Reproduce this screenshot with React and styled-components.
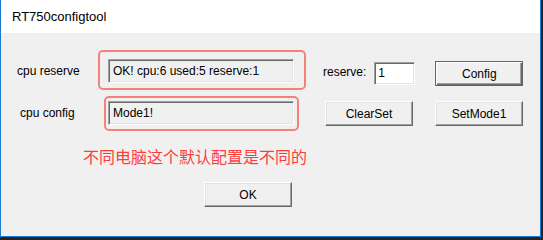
import React from 'react';
import styled, { createGlobalStyle, css } from 'styled-components';

const GlobalStyle = createGlobalStyle`
  html, body {
    margin: 0;
    padding: 0;
    background: #232323;
  }
  body {
    font-family: "Liberation Sans", Arial, sans-serif;
    font-size: 12px;
    color: #000;
  }
`;

const Window = styled.div`
  box-sizing: border-box;
  width: 541px;
  height: max(219px, calc(100vh - 3px));
  border: 1px solid #1a7ad0;
  border-top: none;
  background: #f0f0f0;
  display: flex;
  flex-direction: column;
`;

const TitleBar = styled.div`
  height: 33px;
  background: #fff;
  display: flex;
  align-items: center;
  padding-left: 11px;
  font-size: 13px;
  color: #000;
  flex-shrink: 0;
`;

const Body = styled.div`
  flex: 1;
  padding-top: 26px;
  padding-left: 16px;
  display: flex;
  flex-direction: column;
`;

const Row = styled.div`
  display: flex;
  align-items: flex-start;
  height: ${p => p.$h}px;
  margin-bottom: ${p => p.$mb || 0}px;
`;

const Label = styled.div`
  width: ${p => (p.$auto ? 'auto' : `${91 - (p.$indent || 0)}px`)};
  padding-left: ${p => p.$indent || 0}px;
  line-height: 24px;
  margin-top: ${p => p.$dy || 0}px;
  margin-left: ${p => p.$ml || 0}px;
  white-space: nowrap;
`;

const FieldWrap = styled.div`
  position: relative;
  margin-top: ${p => p.$dy || 0}px;
  margin-left: ${p => p.$ml || 0}px;
`;

const Edit = styled.div`
  box-sizing: border-box;
  width: ${p => p.$w}px;
  height: ${p => p.$h}px;
  border: 1px solid;
  border-color: #a0a0a0 #ffffff #ffffff #a0a0a0;
  box-shadow: inset 1px 1px 0 #696969, inset -1px -1px 0 #e3e3e3;
  background: ${p => (p.$white ? '#fff' : '#f0f0f0')};
  padding-left: ${p => p.$pl || 4}px;
  line-height: ${p => p.$h - 4}px;
  padding-top: 1px;
  white-space: nowrap;
  overflow: hidden;
`;

// red annotation frame drawn over an edit box
const Annotation = styled.div`
  position: absolute;
  top: ${p => p.$t}px;
  left: ${p => p.$l}px;
  right: ${p => p.$r}px;
  bottom: ${p => p.$b}px;
  border: 2px solid #f3827c;
  border-radius: 5px;
  pointer-events: none;
`;

const Button = styled.div`
  box-sizing: border-box;
  width: 88px;
  height: 25px;
  margin-top: ${p => p.$dy || 0}px;
  margin-left: ${p => p.$ml || 0}px;
  background: #f0f0f0;
  display: flex;
  align-items: center;
  justify-content: center;
  font-size: 12px;
  border: 1px solid;
  border-color: #ffffff #696969 #696969 #ffffff;
  box-shadow: inset -1px -1px 0 #a0a0a0, inset 1px 1px 0 #e3e3e3;
  ${p =>
    p.$default &&
    css`
      border: 1px solid #646464;
      box-shadow: inset 1px 1px 0 #ffffff, inset -1px -1px 0 #696969,
        inset -2px -2px 0 #a0a0a0;
    `}
`;

const Note = styled.div`
  margin-top: 21px;
  padding-left: 66px;
  font-family: "Noto Sans CJK SC", "Liberation Sans", sans-serif;
  font-size: 16px;
  line-height: 18px;
  color: #ff3c3c;
`;

const Footer = styled.div`
  display: flex;
  margin-top: 17px;
  padding-left: 187px;
`;

export default function App() {
  return (
    <>
      <GlobalStyle />
      <Window>
        <TitleBar>RT750configtool</TitleBar>
        <Body>
          <Row $h={27} $mb={15}>
            <Label>cpu reserve</Label>
            <FieldWrap>
              <Edit $w={186} $h={24}>OK! cpu:6 used:5 reserve:1</Edit>
              <Annotation $t={-9} $l={-10} $r={-12} $b={-7} />
            </FieldWrap>
            <Label $auto $dy={1} $ml={29}>reserve:</Label>
            <FieldWrap $dy={3} $ml={8}>
              <Edit $w={41} $h={23} $white $pl={3}>1</Edit>
            </FieldWrap>
            <Button $default $dy={2} $ml={20}>Config</Button>
          </Row>
          <Row $h={25}>
            <Label $indent={3}>cpu config</Label>
            <FieldWrap>
              <Edit $w={186} $h={24}>Mode1!</Edit>
              <Annotation $t={-5} $l={-4} $r={-5} $b={-6} />
            </FieldWrap>
            <Button $ml={31}>ClearSet</Button>
            <Button $ml={22}>SetMode1</Button>
          </Row>
          <Note>不同电脑这个默认配置是不同的</Note>
          <Footer>
            <Button>OK</Button>
          </Footer>
        </Body>
      </Window>
    </>
  );
}
